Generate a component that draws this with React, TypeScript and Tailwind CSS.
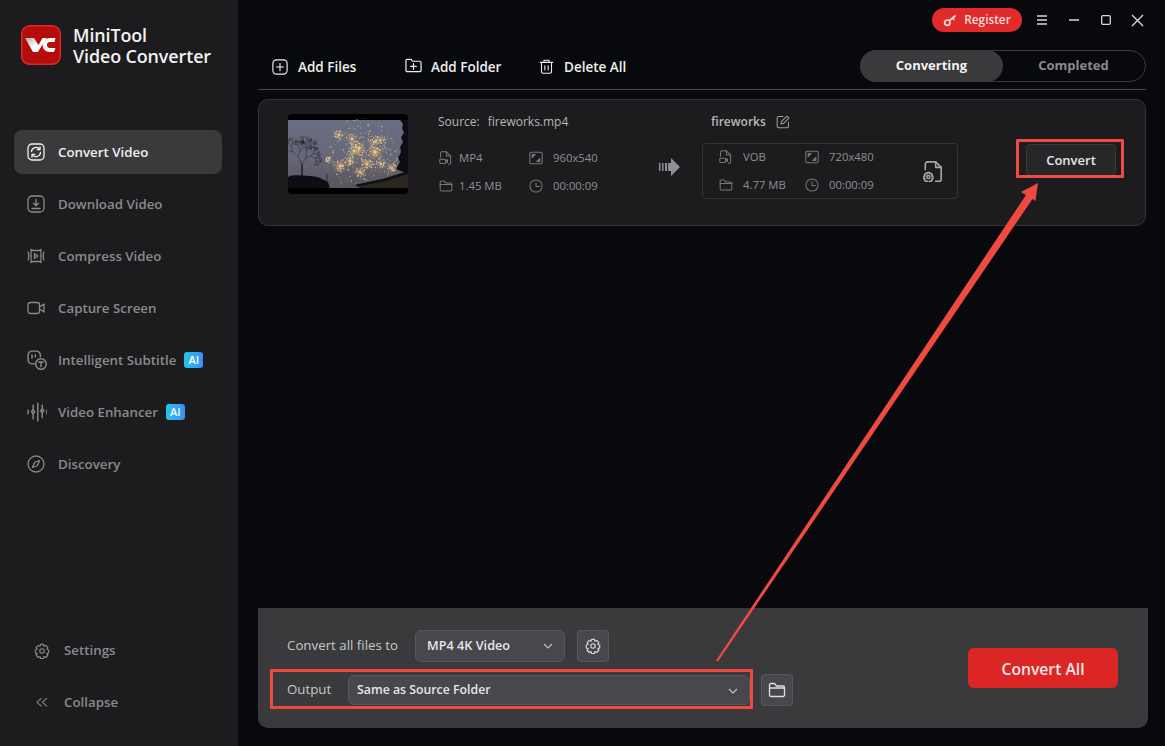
import React from "react";

const stroke = { fill: "none", stroke: "currentColor", strokeWidth: 1.3, strokeLinecap: "round", strokeLinejoin: "round" } as const;

function Ico({ s = 18, children, className = "" }: { s?: number; children: React.ReactNode; className?: string }) {
  return (
    <svg width={s} height={s} viewBox="0 0 18 18" className={"shrink-0 " + className} {...stroke}>
      {children}
    </svg>
  );
}

const ConvertIco = () => (
  <Ico>
    <rect x="1" y="1" width="16" height="16" rx="4" />
    <path d="M4.500 8.500A4.500 4.500 0 0 1 12.600 6.200M13.500 9.500A4.500 4.500 0 0 1 5.400 11.800" />
    <path d="M13 3.800v2.800h-2.800M5 14.200v-2.800h2.800" />
  </Ico>
);
const DownloadIco = () => (
  <Ico>
    <rect x="1" y="1" width="16" height="16" rx="4" />
    <path d="M9 4.500v6M6.500 8.300 9 10.800l2.500-2.500M5 13.500h8" />
  </Ico>
);
const CompressIco = () => (
  <Ico>
    <path d="M1 5c1 2.500 1 5.500 0 8M17 5c-1 2.500-1 5.500 0 8" />
    <path d="M4 2.500 5.500 3.500h7L14 2.500v13l-1.500-1h-7L4 15.500z" />
    <path d="M7.500 6.800v4.400L11 9z" />
  </Ico>
);
const CaptureIco = () => (
  <Ico>
    <rect x="1" y="3.500" width="11.500" height="11" rx="2.500" />
    <path d="M12.500 8 17 5v8l-4.500-3" />
  </Ico>
);
const SubtitleIco = () => (
  <Ico s={20}>
    <path d="M7 12.500H4.500A3.500 3.500 0 0 1 1 9V4.500A3.500 3.500 0 0 1 4.500 1h4A3.500 3.500 0 0 1 12 4.500V6" />
    <path d="M4.500 4.500v3M7.500 4.500v1.500" />
    <circle cx="12.600" cy="12.600" r="4.800" />
    <path d="M10.500 10.800h4.200M12.600 10.800v4.200" />
  </Ico>
);
const EnhanceIco = () => (
  <Ico s={20}>
    <path d="M1 7.500v3M18 7.500v3M9.700 1v16" />
    <path d="M5.500 3v3.500M5.500 11v4M13.700 3v2.500M13.700 10v4" />
    <path d="M5.500 7 7 8.800 5.500 10.500 4 8.800zM13.700 6 15.200 7.800 13.700 9.500 12.200 7.800z" />
  </Ico>
);
const DiscoveryIco = () => (
  <Ico>
    <circle cx="9" cy="9" r="8" />
    <path d="M12.500 5.500 10.500 10.500 5.500 12.500 7.500 7.500z" />
  </Ico>
);
const gearPath =
  "M7.300 1.500h3.400l.5 2.200 2-1 2.400 2.500-1.200 1.900 2.100.7v3.400l-2.100.7 1.200 1.900-2.400 2.500-2-1-.5 2.200H7.300l-.5-2.200-2 1-2.400-2.500 1.200-1.900-2.100-.7V7.800l2.100-.7-1.200-1.900 2.400-2.500 2 1z";
const GearIco = ({ s = 18 }: { s?: number }) => (
  <Ico s={s}>
    <path d={gearPath} />
    <circle cx="9" cy="9" r="2.500" />
  </Ico>
);
const CollapseIco = () => (
  <Ico s={14}>
    <path d="M8 3 2.500 8 8 13M15 3 9.500 8 15 13" />
  </Ico>
);
const FileVideoIco = () => (
  <Ico s={14}>
    <path d="M2 8V2.500A1.500 1.500 0 0 1 3.500 1h6L15 6.500v9a1.500 1.500 0 0 1-1.500 1.500H12" />
    <path d="M9.500 1v5.500H15" />
    <rect x="1" y="10.500" width="7.500" height="5.500" rx="1.200" />
    <path d="M8.500 12.500l2.500-1.200v3.400l-2.500-1.200" />
  </Ico>
);
const ResizeIco = () => (
  <Ico s={14}>
    <rect x="1" y="1.500" width="16" height="15" rx="2" />
    <path d="M4 4.500h4L4 8.500zM14 13.500h-4l4-4z" fill="currentColor" />
  </Ico>
);
const FolderIco = ({ s = 14 }: { s?: number }) => (
  <Ico s={s}>
    <path d="M1.500 4A1.500 1.500 0 0 1 3 2.500h3.500L8.500 5H15a1.500 1.500 0 0 1 1.500 1.500V14a1.500 1.500 0 0 1-1.500 1.500H3A1.500 1.500 0 0 1 1.500 14z" />
    <path d="M1.500 7h15" />
  </Ico>
);
const ClockIco = () => (
  <Ico s={14}>
    <circle cx="9" cy="9" r="7.800" />
    <path d="M9 4.500V9.500h4.500" />
  </Ico>
);
const Chevron = () => (
  <svg width="10" height="6" viewBox="0 0 10 6" className="shrink-0 text-[#c4c4c8]" fill="none" stroke="currentColor" strokeWidth="1.100">
    <path d="M1 1l4 4 4-4" />
  </svg>
);

const nav = [
  { label: "Convert Video", icon: <ConvertIco />, active: true },
  { label: "Download Video", icon: <DownloadIco /> },
  { label: "Compress Video", icon: <CompressIco /> },
  { label: "Capture Screen", icon: <CaptureIco /> },
  { label: "Intelligent Subtitle", icon: <SubtitleIco />, ai: true },
  { label: "Video Enhancer", icon: <EnhanceIco />, ai: true },
  { label: "Discovery", icon: <DiscoveryIco /> },
];

function Logo() {
  return (
    <svg width="40" height="40" viewBox="0 0 40 40" className="shrink-0">
      <defs>
        <linearGradient id="lv" x1="0" y1="0" x2="1" y2="1">
          <stop offset="0" stopColor="#a8a8a8" />
          <stop offset="0.500" stopColor="#ffffff" />
          <stop offset="1" stopColor="#e0e0e0" />
        </linearGradient>
      </defs>
      <rect x="0.750" y="0.750" width="38.500" height="38.500" rx="8" fill="#b50c0c" stroke="#e02626" strokeWidth="1.500" />
      <path d="M4 13h9l4.500 7 4-7h4L17 27h-5z" fill="url(#lv)" />
      <path d="M34.500 13h-6a7 7 0 0 0-7 7 7 7 0 0 0 7 7h4.500l1.500-4h-5.500a3 3 0 0 1 0-6h4.500z" fill="#f4f4f4" />
    </svg>
  );
}

let rngState = 12345;
function rnd() {
  rngState = (rngState * 16807) % 2147483647;
  return rngState / 2147483647;
}

const bursts = [
  [51, 21, 2.600], [64, 25, 3], [66, 37, 3.300], [71, 34, 3.800], [87, 38, 4.200], [92, 26, 2.400], [62, 47, 3.200],
  [52, 52, 3.400], [79, 50, 3.200], [93, 50, 2.800], [41, 46, 1.800], [104, 54, 2.800], [86, 28, 2.200], [72, 58, 2.800],
];

const sparkDots = Array.from({ length: 420 }, () => {
  const a = rnd() * Math.PI * 2;
  const r = 38 * Math.pow(rnd(), 0.700);
  return {
    cx: 74 + r * Math.cos(a) * 0.950,
    cy: 40 + r * Math.sin(a) * 0.950,
    r: 0.250 + rnd() * 0.500,
    o: 0.350 + rnd() * 0.600,
  };
}).filter((d) => d.cy < 70);

const burstDots = bursts.flatMap((b) =>
  Array.from({ length: 16 }, () => {
    const a = rnd() * Math.PI * 2;
    const r = b[2] * (0.800 + rnd() * 1.100);
    return { cx: b[0] + r * Math.cos(a), cy: b[1] + r * Math.sin(a), r: 0.300 + rnd() * 0.400 };
  })
);

function branches(x: number, y: number, ang: number, len: number, depth: number): string {
  const x2 = x + Math.cos(ang) * len;
  const y2 = y + Math.sin(ang) * len;
  let d = `M${x.toFixed(1)} ${y.toFixed(1)}L${x2.toFixed(1)} ${y2.toFixed(1)}`;
  if (depth > 0) {
    d += branches(x2, y2, ang - 0.250 - rnd() * 0.600, len * (0.620 + rnd() * 0.220), depth - 1);
    d += branches(x2, y2, ang + 0.250 + rnd() * 0.600, len * (0.620 + rnd() * 0.220), depth - 1);
  }
  return d;
}
const treePath = branches(14, 64, -1.570, 13, 7);

function Thumb() {
  return (
    <svg width="120" height="80" viewBox="0 0 120 80" className="shrink-0 rounded-[4px]">
      <defs>
        <linearGradient id="sky" x1="0" y1="0" x2="0" y2="1">
          <stop offset="0" stopColor="#6a6e84" />
          <stop offset="0.550" stopColor="#666778" />
          <stop offset="1" stopColor="#57555c" />
        </linearGradient>
        <filter id="bl"><feGaussianBlur stdDeviation="0.250" /></filter>
        <filter id="bl2"><feGaussianBlur stdDeviation="1.500" /></filter>
      </defs>
      <rect width="120" height="80" fill="#000" />
      <rect y="6" width="120" height="68" fill="url(#sky)" />
      <g filter="url(#bl2)">
        {bursts.map((b, i) => (
          <circle key={i} cx={b[0]} cy={b[1]} r={b[2] * 1.300} fill="#d9a968" opacity="0.500" />
        ))}
      </g>
      <g filter="url(#bl)">
        {sparkDots.map((d, i) => (
          <circle key={i} cx={d.cx} cy={d.cy} r={d.r} fill="#eccb8c" opacity={d.o} />
        ))}
        {burstDots.map((d, i) => (
          <circle key={i} cx={d.cx} cy={d.cy} r={d.r} fill="#f5dba4" />
        ))}
        {bursts.map((b, i) => (
          <circle key={i} cx={b[0]} cy={b[1]} r={b[2] * 0.450} fill="#f0d296" opacity="0.850" />
        ))}
        <path d={treePath} stroke="#17171c" strokeWidth="0.400" fill="none" />
        <path d="M14 66V50" stroke="#111115" strokeWidth="1.100" />
      </g>
      <path d="M0 63 C6 60 14 62 22 62 C30 62 36 66 40 68 L42 74 H0z" fill="#101013" filter="url(#bl)" />
      <path d="M39 60v14" stroke="#17171c" strokeWidth="0.700" />
      <path d="M67 71 L96 66 L120 58 V74 H72z" fill="#2c2622" />
      <path d="M66 71 L96 64.500 L120 57 V60 L96 67.500 L72 72z" fill="#121216" />
      <path d="M120 6 L112 6 L115 10 L114 14 L116 19 L113 23 L115 28 L112 33 L113 38 L110 44 L112 48 L108 55 L120 60z" fill="#0e0e12" filter="url(#bl)" />
    </svg>
  );
}

function Info({ icon, text, w = "w-[21px]" }: { icon: React.ReactNode; text: string; w?: string }) {
  return (
    <div className="flex items-center text-[11.3px] leading-[18px] text-[#8f8f93]">
      <span className={"flex shrink-0 text-[#77777b] " + w}>{icon}</span>
      <span className="whitespace-nowrap">{text}</span>
    </div>
  );
}

function ArrowOverlay() {
  return (
    <svg className="absolute left-0 top-0 pointer-events-none" width="1165" height="746" viewBox="0 0 1165 746">
      <path d="M716 660.500 L1026 195 L1021 192 L1038 183 L1035.500 201 L1032.500 199 L718 661.500z" fill="#ef4a40" />
    </svg>
  );
}

export default function App() {
  return (
    <div
      className="relative flex h-[746px] w-[1165px] overflow-hidden bg-[#08090c] text-white"
      style={{ fontFamily: '"Open Sans","Noto Sans","Liberation Sans",sans-serif' }}
    >
      {/* Sidebar */}
      <aside className="flex w-[238px] shrink-0 flex-col bg-[#1c1c1e] pb-[21px]">
        <div className="flex h-[130px] items-start gap-[12px] pl-[21px] pt-[25px]">
          <Logo />
          <div className="text-[17.9px] font-semibold leading-[21px] tracking-[-0.1px] text-[#f2f2f2]">
            <div>MiniTool</div>
            <div className="whitespace-nowrap">Video Converter</div>
          </div>
        </div>
        <nav className="flex flex-col gap-[8px] pl-[14px] pr-[16px]">
          {nav.map((n) => (
            <div
              key={n.label}
              className={
                "flex h-[44px] items-center rounded-[8px] pl-[13px] text-[13.3px] font-semibold " +
                (n.active ? "bg-[#3a3a3c] text-[#f0f0f0]" : "text-[#8a8a8d]")
              }
            >
              <span className="flex w-[31px] shrink-0 items-center">{n.icon}</span>
              <span className="whitespace-nowrap pt-[1px]">{n.label}</span>
              {n.ai && (
                <span className="ml-[8px] rounded-[3px] bg-gradient-to-r from-[#22c4ee] to-[#3b8cf6] px-[4px] text-[11px] font-semibold leading-[16px] text-white">
                  AI
                </span>
              )}
            </div>
          ))}
        </nav>
        <div className="mt-auto flex flex-col gap-[8px] px-[14px]">
          <div className="flex h-[44px] items-center pl-[20px] text-[13.3px] font-semibold text-[#8a8a8d]">
            <span className="w-[30px] shrink-0"><GearIco s={16} /></span>
            Settings
          </div>
          <div className="flex h-[44px] items-center pl-[21px] text-[13.3px] font-semibold text-[#8a8a8d]">
            <span className="w-[29px] shrink-0"><CollapseIco /></span>
            Collapse
          </div>
        </div>
      </aside>

      {/* Main */}
      <main className="flex min-w-0 flex-1 flex-col pb-[18px] pl-[20px] pr-[19px]">
        {/* Title bar */}
        <div className="flex h-[40px] items-center justify-end">
          <div className="flex h-[24px] w-[90px] items-center justify-center gap-[7px] rounded-full bg-[#e12a2a] text-[11.8px] font-semibold text-[#f5dede]">
            <svg width="14" height="14" viewBox="0 0 14 14" fill="none" stroke="currentColor" strokeWidth="1.700" strokeLinecap="round">
              <circle cx="4.300" cy="9.700" r="2.700" />
              <path d="M6.500 7.500 12 3M9.500 5l1.500 1.500" />
            </svg>
            Register
          </div>
          <div className="ml-[14px] flex w-[110px] items-center justify-between pr-[2px] text-[#d8d8d8]">
            <svg width="12" height="10" viewBox="0 0 12 10" stroke="currentColor" strokeWidth="1.400"><path d="M1 1h10M1 5h10M1 9h10" /></svg>
            <svg width="12" height="2" viewBox="0 0 12 2" stroke="currentColor" strokeWidth="1.500"><path d="M1 1h10" /></svg>
            <svg width="10" height="10" viewBox="0 0 10 10" fill="none" stroke="currentColor" strokeWidth="1.300"><rect x="0.700" y="0.700" width="8.600" height="8.600" rx="1.200" /></svg>
            <svg width="13" height="13" viewBox="0 0 13 13" stroke="currentColor" strokeWidth="1.400"><path d="M1 1l11 11M12 1 1 12" /></svg>
          </div>
        </div>

        {/* Toolbar */}
        <div className="flex h-[50px] items-start justify-between border-b border-[#48484a] pt-[10px]">
          <div className="mt-[1px] flex h-[32px] items-center pl-[14px] text-[13.5px] font-semibold text-[#eeeeee]">
            <div className="flex w-[133px] items-center gap-[10px]">
              <Ico s={16}><rect x="1" y="1" width="16" height="16" rx="4" /><path d="M9 5v8M5 9h8" /></Ico>
              Add Files
            </div>
            <div className="flex w-[134px] items-center gap-[9px]">
              <span className="-mt-[3px] flex"><Ico s={17}><path d="M1 4A1.500 1.500 0 0 1 2.500 2.500h4L8 4.500h7.500A1.500 1.500 0 0 1 17 6v8a1.500 1.500 0 0 1-1.500 1.500h-13A1.500 1.500 0 0 1 1 14z" /><path d="M9 7v6M6 10h6" /></Ico></span>
              Add Folder
            </div>
            <div className="flex items-center gap-[10px]">
              <span className="-mt-[1px] flex"><Ico s={15}><path d="M1.500 4h15M6 4V1.500h6V4M3 4v11a2 2 0 0 0 2 2h8a2 2 0 0 0 2-2V4M7 8v5M11 8v5" /></Ico></span>
              Delete All
            </div>
          </div>
          <div className="flex h-[32px] w-[286px] rounded-full border border-[#3a3a3c] text-[13px] font-bold">
            <div className="-m-px flex h-[32px] w-[143px] items-center justify-center rounded-full bg-[#3a3a3c] text-[#f2f2f2]">Converting</div>
            <div className="flex flex-1 items-center justify-center text-[#8a8a8d]">Completed</div>
          </div>
        </div>

        {/* Card */}
        <div className="mt-[9px] flex h-[127px] items-start rounded-[10px] border border-[#353537] bg-[#1c1c1e] pl-[29px] pt-[14px]">
          <Thumb />
          <div className="ml-[30px] flex w-[172px] flex-col">
            <div className="flex h-[16px] items-center gap-[8px] text-[12px] text-[#b4b4b6]">
              <span>Source:</span><span>fireworks.mp4</span>
            </div>
            <div className="mt-[19px] grid grid-cols-[90px_80px] gap-y-[10px] pl-[1px]">
              <Info icon={<FileVideoIco />} text="MP4" w="w-[20px]" />
              <Info icon={<ResizeIco />} text="960x540" w="w-[24px]" />
              <Info icon={<FolderIco />} text="1.45 MB" w="w-[20px]" />
              <Info icon={<ClockIco />} text="00:00:09" w="w-[24px]" />
            </div>
          </div>
          <div className="ml-[49px] mt-[44px] w-[23px] shrink-0">
            <svg width="21" height="18" viewBox="0 0 21 18" fill="#8f8f93">
              <rect x="0" y="5" width="1.500" height="8" />
              <rect x="3" y="5" width="1.500" height="8" />
              <rect x="6" y="5" width="2" height="8" />
              <path d="M9 5h3V0l9 9-9 9v-5H9z" />
            </svg>
          </div>
          <div className="ml-[20px] flex flex-col">
            <div className="flex h-[16px] items-center gap-[10px] pl-[9px] text-[12px] font-semibold text-[#b8b8ba]">
              fireworks
              <span className="text-[#a0a0a2]">
                <Ico s={14}><path d="M9 2H3.500A2 2 0 0 0 1.500 4v10.500a2 2 0 0 0 2 2H14a2 2 0 0 0 2-2V9" /><path d="M6.500 11.500 7 8.500 14 1.500l2.500 2.500-7 7z" /></Ico>
              </span>
            </div>
            <div className="mt-[13px] flex h-[56px] w-[256px] items-center rounded-[4px] border border-[#353537] pl-[16px]">
              <div className="grid grid-cols-[86px_86px] gap-y-[10px]">
                <Info icon={<FileVideoIco />} text="VOB" w="w-[24px]" />
                <Info icon={<ResizeIco />} text="720x480" w="w-[24px]" />
                <Info icon={<FolderIco />} text="4.77 MB" w="w-[24px]" />
                <Info icon={<ClockIco />} text="00:00:09" w="w-[24px]" />
              </div>
              <span className="ml-[30px] text-[#a8a8aa]">
                <Ico s={22}>
                  <path d="M3.500 8V3.500A2 2 0 0 1 5.500 1.500h6.500L16.500 6v10a1.500 1.500 0 0 1-1.500 1.500h-3" />
                  <path d="M12 1.500V6h4.500" />
                  <g transform="translate(1.500 9.500) scale(0.500)" strokeWidth="2.400">
                    <path d={gearPath} />
                    <circle cx="9" cy="9" r="2.500" />
                  </g>
                </Ico>
              </span>
            </div>
          </div>
          <div className="ml-auto mr-[29px] mt-[30px] flex h-[32px] w-[90px] items-center justify-center rounded-[4px] border border-[#3a3a3c] bg-[#272729] pt-[1px] text-[13px] font-semibold text-[#e8e8e8]">
            Convert
          </div>
        </div>

        {/* Bottom panel */}
        <div className="-mr-[2px] mt-auto flex h-[120px] items-center justify-between rounded-b-[10px] bg-[#3a3a3c] pl-[29px] pr-[30px]">
          <div className="flex flex-col gap-[12px]">
            <div className="flex items-center">
              <span className="w-[128px] text-[13.3px] text-[#c8c8ca]">Convert all files to</span>
              <div className="flex h-[32px] w-[150px] items-center justify-between rounded-[6px] border border-[#58585c] bg-[#48484c] px-[11px] text-[12.7px] font-semibold text-[#e6e6e8]">
                MP4 4K Video <Chevron />
              </div>
              <div className="ml-[12px] flex h-[32px] w-[32px] items-center justify-center rounded-[4px] border border-[#58585c] bg-[#48484c] text-[#d8d8da]">
                <GearIco s={16} />
              </div>
            </div>
            <div className="flex items-center">
              <span className="w-[61px] text-[13.3px] text-[#c8c8ca]">Output</span>
              <div className="flex h-[30px] w-[402px] items-center justify-between rounded-[6px] border border-[#58585c] bg-[#48484c] pl-[8px] pr-[11px] pt-[1px] text-[12.3px] font-semibold text-[#e6e6e8]">
                Same as Source Folder <Chevron />
              </div>
              <div className="ml-[11px] flex h-[32px] w-[32px] items-center justify-center rounded-[4px] border border-[#58585c] bg-[#48484c] text-[#e0e0e2]">
                <FolderIco s={18} />
              </div>
            </div>
          </div>
          <div className="flex h-[40px] w-[150px] items-center justify-center rounded-[6px] bg-[#dc2626] pt-[3px] text-[15.7px] font-semibold text-[#f0e4e4]">
            Convert All
          </div>
        </div>
      </main>

      {/* Annotations */}
      <ArrowOverlay />
      <div className="pointer-events-none absolute left-[1016px] top-[139px] h-[39px] w-[108px] rounded-[1px] border-[3px] border-[#ef4a40]" />
      <div className="pointer-events-none absolute left-[270px] top-[669px] h-[40px] w-[483px] rounded-[1px] border-[3px] border-[#ef4a40]" />
    </div>
  );
}
